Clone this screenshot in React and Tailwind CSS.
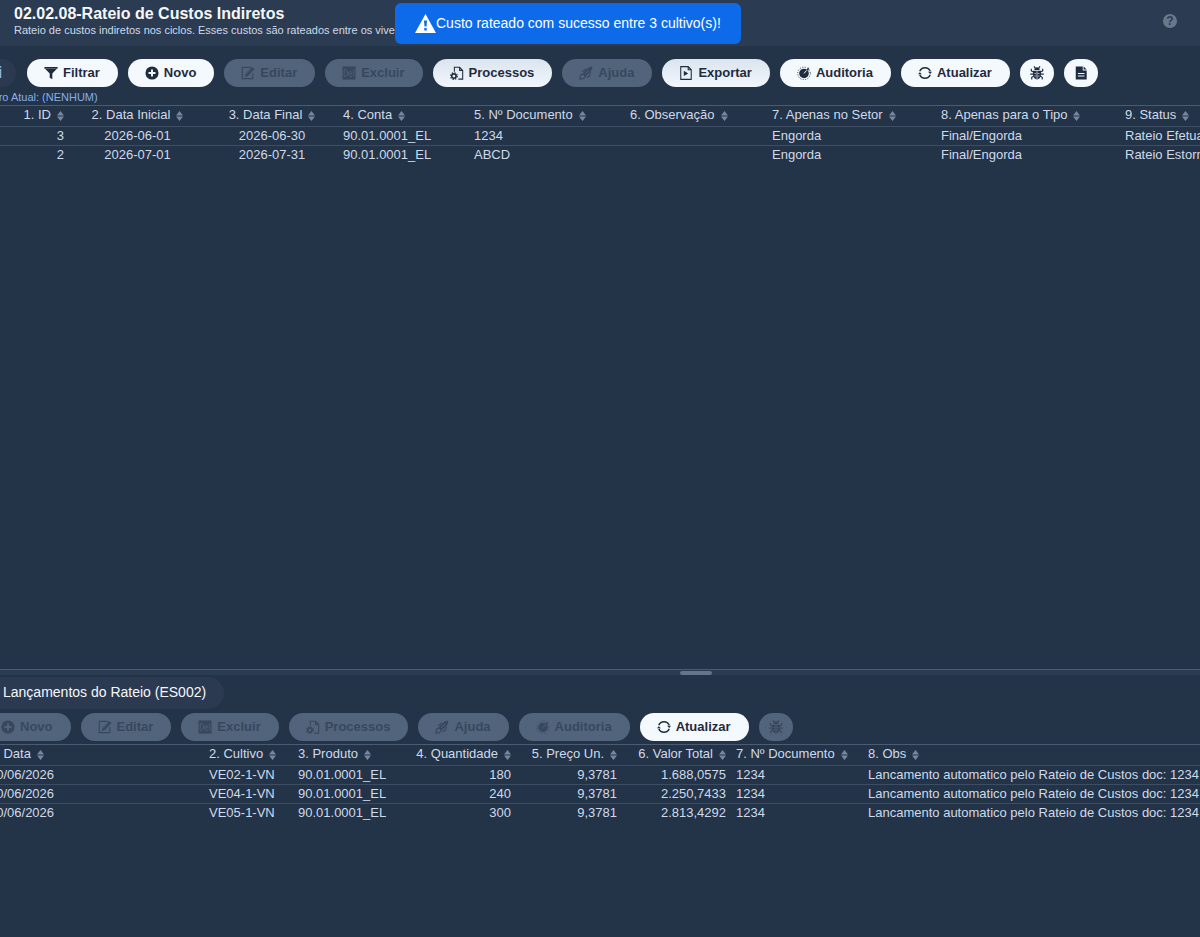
import React from 'react';

const icons = {
  filter: <path d="M.5 1h15v2H.5zM1.500 3.500h13L9.500 8.500V15l-3-1.500v-5z" fill="currentColor" />,
  plus: (
    <>
      <circle cx="8" cy="8" r="7.500" fill="currentColor" />
      <path d="M8 4v8M4 8h8" stroke="var(--knock)" strokeWidth="2.200" />
    </>
  ),
  edit: (
    <>
      <path d="M11 1.500H1.500v13h12V8" fill="none" stroke="currentColor" strokeWidth="1.300" />
      <path d="M4.500 12.500l.8-4L12.500 1l3 2.500-7.200 7.500z" fill="currentColor" />
      <path d="M6 9l5.500-5.500" stroke="var(--knock)" strokeWidth=".8" />
    </>
  ),
  del: (
    <>
      <path d="M.5.5h15v15H.5z" fill="currentColor" />
      <path d="M2.500 4v8h1.500L6.300 10V6L4 4zM8 9h3.300V7.500L10.500 6.500H9L8 7.500V11l1 1h2.300M13.500 4v8" fill="none" stroke="var(--knock)" strokeWidth=".9" />
    </>
  ),
  process: (
    <>
      <path d="M5 6.500V1.500h6L14.500 5v10H9.500M11 1.500V5h3.500" fill="none" stroke="currentColor" strokeWidth="1.200" />
      <circle cx="4.500" cy="11.500" r="2.500" fill="none" stroke="currentColor" strokeWidth="1.800" />
      <circle cx="4.500" cy="11.500" r="3.900" fill="none" stroke="currentColor" strokeWidth="1.200" strokeDasharray="1.530 1.530" />
    </>
  ),
  help: (
    <>
      <path d="M4 8.500L10.500 2 14 .5 15.500 2 14 5.500 7.500 12z" fill="currentColor" />
      <path d="M1 15l.8-4.500L5 9l2.500 3L5 14.500zM9 13l3-1.500 1-4.500M3.500 6.500L8 3.500" fill="none" stroke="currentColor" strokeWidth="1.300" />
      <path d="M7 9l4.500-4.500" stroke="var(--knock)" strokeWidth="1.100" />
    </>
  ),
  exportar: (
    <>
      <path d="M2 .7h8.500L14 4.300v11H2zM10.500.7v3.600H14" fill="none" stroke="currentColor" strokeWidth="1.200" />
      <path d="M5.500 5.500v6l5-3z" fill="currentColor" />
    </>
  ),
  audit: (
    <>
      <circle cx="8" cy="8.500" r="5.500" fill="currentColor" />
      <circle cx="8" cy="8.500" r="7.200" fill="none" stroke="currentColor" strokeWidth="1" strokeDasharray="1.200 1.620" />
      <path d="M8 8.500l3-3.500" stroke="var(--knock)" strokeWidth="1.100" />
      <path d="M11 4l3-2.500-1 4z" fill="currentColor" />
    </>
  ),
  refresh: (
    <>
      <path d="M2 6A6.500 6.500 0 0 1 14 6M14 10A6.500 6.500 0 0 1 2 10" fill="none" stroke="currentColor" strokeWidth="1.700" />
      <path d="M11.500 6.500h4.500L14 9zM0 9.500h4.500L2 7z" fill="currentColor" />
    </>
  ),
  bug: (
    <>
      <path d="M5 4.500a3 3 0 0 1 6 0zM3.500 5.300h9V10a4.500 5.300 0 0 1-9 0z" fill="currentColor" />
      <path d="M6 2.500L4.500.5M10 2.500L11.500.5M4 7L1.500 5.500V3M12 7L14.500 5.500V3M4 9.300H.3M12 9.300h3.700M4.500 11.500L2 13V15.500M11.500 11.500l2.500 1.500V15.500" fill="none" stroke="currentColor" strokeWidth="1.300" />
      <path d="M8 6v9" stroke="var(--knock)" strokeWidth=".9" />
      <path d="M5.300 8.500h1.200M9.500 8.500h1.200M5.300 11.500h1.200M9.500 11.500h1.200" stroke="var(--knock)" strokeWidth="1.100" />
    </>
  ),
  file: (
    <>
      <path d="M2 .5h8v4.500h4.500v10.500H2zM11 .5L14.500 4H11z" fill="currentColor" />
      <path d="M4.500 8.500h7.500M4.500 11.500h7.500" stroke="var(--knock)" strokeWidth="1.200" />
    </>
  ),
};

const Icon = ({ name }) => (
  <svg viewBox="0 0 16 16" className="w-3.5 h-3.5 shrink-0" aria-hidden="true">
    {icons[name]}
  </svg>
);

const tones = {
  light: 'bg-[#f4f9fe] text-[#1f2b3e] [--knock:#f4f9fe]',
  shaded: 'bg-linear-to-b from-[#dbe4ee] to-[#f1f6fc] text-[#1f2b3e] [--knock:#e8eff7]',
  off: 'bg-[#51647b] text-[#37485e] [--knock:#51647b]',
};

const ToolButton = ({ icon, label, title, tone = 'light' }) => (
  <button
    type="button"
    disabled={tone === 'off'}
    aria-label={title}
    className={`h-7 shrink-0 rounded-full flex items-center gap-[5px] text-[13px] font-bold ${label ? 'pl-[17px] pr-[18px]' : 'px-2.5'} ${tones[tone]}`}
  >
    <Icon name={icon} />
    {label}
  </button>
);

const mainActions = [
  { icon: 'filter', label: 'Filtrar' },
  { icon: 'plus', label: 'Novo' },
  { icon: 'edit', label: 'Editar', tone: 'off' },
  { icon: 'del', label: 'Excluir', tone: 'off' },
  { icon: 'process', label: 'Processos', tone: 'shaded' },
  { icon: 'help', label: 'Ajuda', tone: 'off' },
  { icon: 'exportar', label: 'Exportar', tone: 'shaded' },
  { icon: 'audit', label: 'Auditoria' },
  { icon: 'refresh', label: 'Atualizar' },
  { icon: 'bug', title: 'Depurar' },
  { icon: 'file', title: 'Documento' },
];

const detailActions = [
  { icon: 'plus', label: 'Novo', tone: 'off' },
  { icon: 'edit', label: 'Editar', tone: 'off' },
  { icon: 'del', label: 'Excluir', tone: 'off' },
  { icon: 'process', label: 'Processos', tone: 'off' },
  { icon: 'help', label: 'Ajuda', tone: 'off' },
  { icon: 'audit', label: 'Auditoria', tone: 'off' },
  { icon: 'refresh', label: 'Atualizar' },
  { icon: 'bug', title: 'Depurar', tone: 'off' },
];

const mainColumns = [
  { label: '1. ID', width: 'w-[85px]', align: 'text-right' },
  { label: '2. Data Inicial', width: 'w-[137px]', align: 'text-center' },
  { label: '3. Data Final', width: 'w-[132px]', align: 'text-center' },
  { label: '4. Conta', width: 'w-[131px]', align: 'text-left' },
  { label: '5. Nº Documento', width: 'w-[156px]', align: 'text-left' },
  { label: '6. Observação', width: 'w-[142px]', align: 'text-left' },
  { label: '7. Apenas no Setor', width: 'w-[169px]', align: 'text-left' },
  { label: '8. Apenas para o Tipo', width: 'w-[184px]', align: 'text-left' },
  { label: '9. Status', width: 'w-auto', align: 'text-left' },
];

const mainRows = [
  ['3', '2026-06-01', '2026-06-30', '90.01.0001_EL', '1234', '', 'Engorda', 'Final/Engorda', 'Rateio Efetuado'],
  ['2', '2026-07-01', '2026-07-31', '90.01.0001_EL', 'ABCD', '', 'Engorda', 'Final/Engorda', 'Rateio Estornado'],
];

const detailColumns = [
  { label: '1. Data', width: 'w-[220px]', align: 'text-left' },
  { label: '2. Cultivo', width: 'w-[89px]', align: 'text-left' },
  { label: '3. Produto', width: 'w-[117px]', align: 'text-left' },
  { label: '4. Quantidade', width: 'w-[106px]', align: 'text-right' },
  { label: '5. Preço Un.', width: 'w-[106px]', align: 'text-right' },
  { label: '6. Valor Total', width: 'w-[109px]', align: 'text-right' },
  { label: '7. Nº Documento', width: 'w-[132px]', align: 'text-left' },
  { label: '8. Obs', width: 'w-auto', align: 'text-left' },
];

const obs = 'Lancamento automatico pelo Rateio de Custos doc: 1234';

const detailRows = [
  ['30/06/2026', 'VE02-1-VN', '90.01.0001_EL', '180', '9,3781', '1.688,0575', '1234', obs],
  ['30/06/2026', 'VE04-1-VN', '90.01.0001_EL', '240', '9,3781', '2.250,7433', '1234', obs],
  ['30/06/2026', 'VE05-1-VN', '90.01.0001_EL', '300', '9,3781', '2.813,4292', '1234', obs],
];

const DataTable = ({ columns, rows }) => (
  <table className="w-full table-fixed border-collapse whitespace-nowrap text-[13px] leading-[18px] text-[#cfdaea]">
    <thead>
      <tr className="border-y border-t-[#4b5b72] border-b-[#3c4d64]">
        {columns.map(col => (
          <th key={col.label} className={`h-5 px-[5px] pb-0.5 font-normal ${col.width} ${col.align}`}>
            {col.label}
            <svg viewBox="0 0 7 10" className="inline-block w-[7px] h-2.5 ml-1.5 fill-[#7787a0]" aria-hidden="true">
              <path d="M3.500 0L7 4.500H0zM0 5.500h7L3.500 10z" />
            </svg>
          </th>
        ))}
      </tr>
    </thead>
    <tbody>
      {rows.map((row, idx) => (
        <tr key={idx} className="border-b border-[#3c4d64] last:border-b-0">
          {row.map((value, i) => (
            <td key={i} className={`h-[18px] px-[5px] ${columns[i].align}`}>{value}</td>
          ))}
        </tr>
      ))}
    </tbody>
  </table>
);

const Toast = ({ children }) => (
  <div
    role="status"
    className="absolute top-[3px] left-[395px] h-[41px] px-5 pb-0.5 rounded-md bg-[#0d6bea] text-white text-sm flex items-center whitespace-nowrap"
  >
    <svg viewBox="0 0 21 19" className="w-[21px] h-[19px] mt-0.5" aria-hidden="true">
      <path d="M10.500 0L21 19H0z" fill="currentColor" />
      <path d="M9 6.500h3l-.5 6h-2zM9.300 14h2.400v2.400H9.300z" fill="#0d6bea" />
    </svg>
    {children}
  </div>
);

const App = () => (
  <div className="relative min-h-screen overflow-hidden bg-[#233348] font-['Liberation_Sans',Arial,sans-serif]">
    <div className="-ml-4 min-h-screen flex flex-col">
      <header className="h-[46px] pl-[30px] pr-[23px] pb-1 bg-[#2b3b51] flex items-center justify-between">
        <div className="whitespace-nowrap pb-0.5">
          <h1 className="text-base leading-5 font-bold text-[#f4f8fd]">02.02.08-Rateio de Custos Indiretos</h1>
          <p className="text-[11px] leading-3 text-[#cfdaea]">
            Rateio de custos indiretos nos ciclos. Esses custos são rateados entre os viveiros ativos.
          </p>
        </div>
        <button type="button" aria-label="Ajuda da tela" className="w-3.5 h-3.5 rounded-full bg-[#6a788c] text-[#2b3b51] text-xs leading-[14px] font-bold">
          ?
        </button>
      </header>

      <div className="pt-[13px] pb-[3px] flex gap-2.5">
        <button type="button" className="w-8 h-7 shrink-0 rounded-full bg-[#2b3a50] text-[#8fb8f0] text-base font-bold mr-px">
          i
        </button>
        {mainActions.map((action, idx) => (
          <ToolButton key={idx} {...action} />
        ))}
      </div>
      <p className="pb-px text-[11px] leading-[14px] text-[#86b0ea]">Filtro Atual: (NENHUM)</p>

      <main className="flex-1">
        <DataTable columns={mainColumns} rows={mainRows} />
      </main>

      <div className="h-1.5 shrink-0 border-t border-[#4b5b72] bg-[#2b3b51] flex items-end pl-[696px]">
        <div className="w-8 h-1 rounded-full bg-[#65758c]" />
      </div>

      <section className="h-[262px] pt-0.5">
        <h2 className="w-60 h-8 pl-[19px] rounded-r-full bg-[#2b3a50] text-sm leading-[30px] text-[#f4f8fd] whitespace-nowrap">
          Lançamentos do Rateio (ES002)
        </h2>
        <div className="pt-1 pb-[3px] flex gap-2.5">
          {detailActions.map((action, idx) => (
            <ToolButton key={idx} {...action} />
          ))}
        </div>
        <DataTable columns={detailColumns} rows={detailRows} />
      </section>
    </div>
    <Toast>Custo rateado com sucesso entre 3 cultivo(s)!</Toast>
  </div>
);

export default App;
